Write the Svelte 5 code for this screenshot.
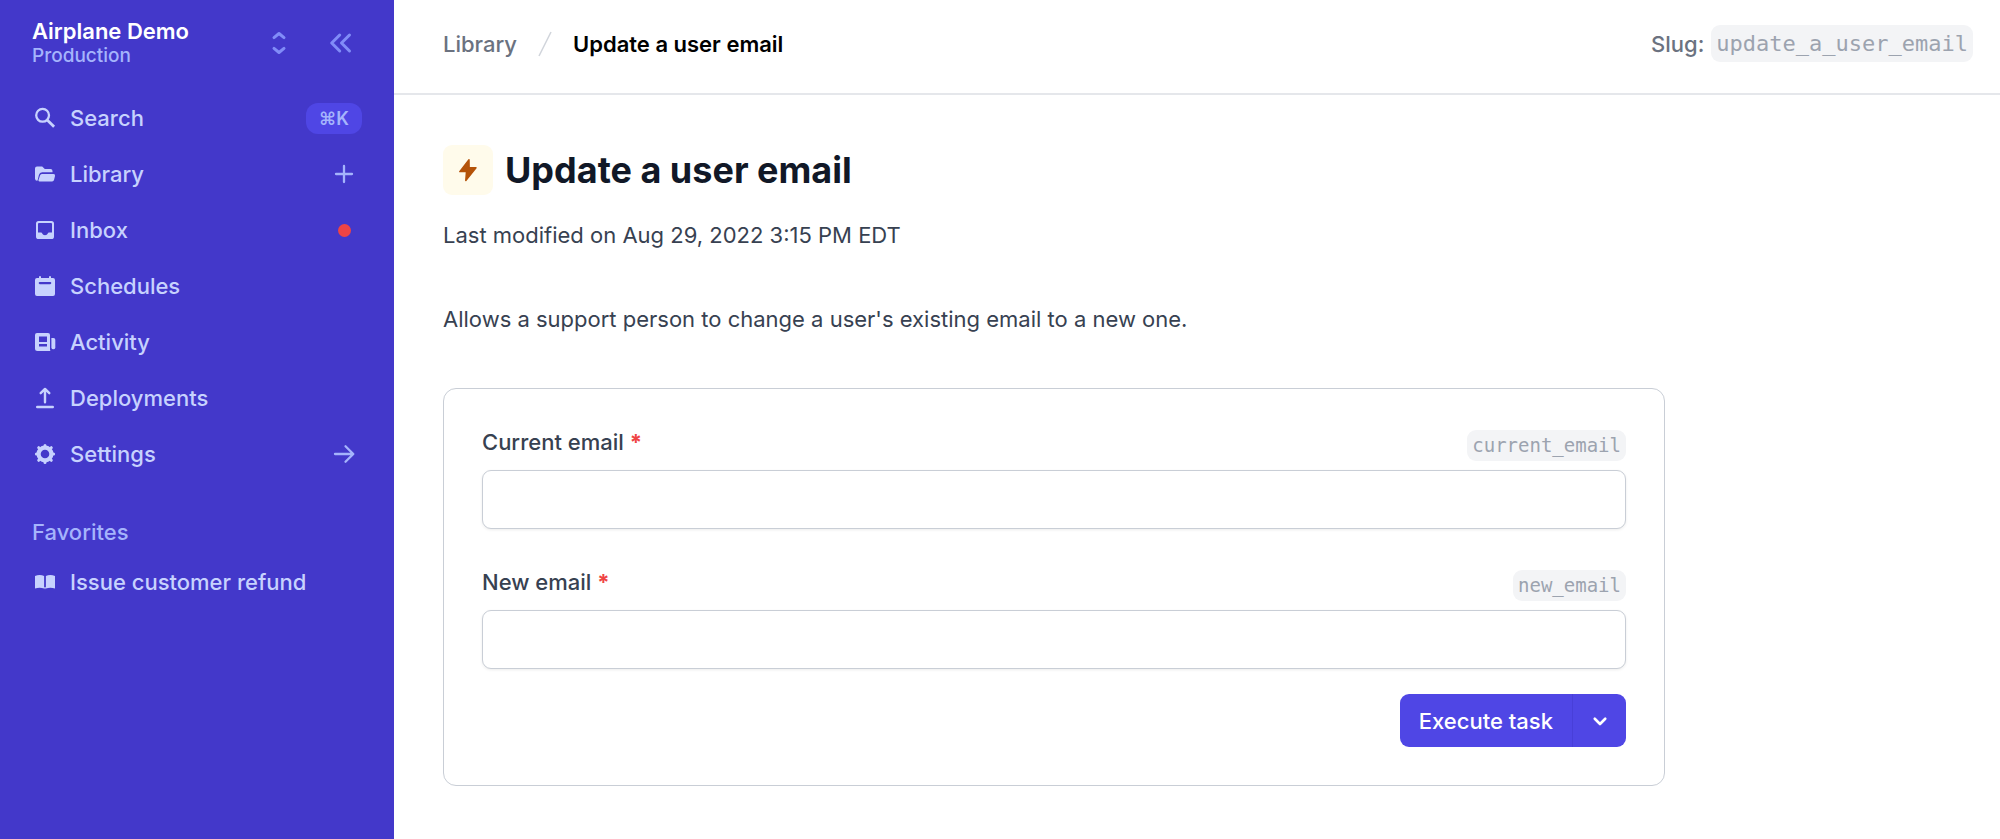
<script>
  // Main navigation; `end` is what sits on the right edge of the row
  const NAV = [
    { icon: 'search', label: 'Search', end: 'shortcut' },
    { icon: 'library', label: 'Library', end: 'plus' },
    { icon: 'inbox', label: 'Inbox', end: 'dot' },
    { icon: 'schedules', label: 'Schedules' },
    { icon: 'activity', label: 'Activity' },
    { icon: 'deployments', label: 'Deployments' },
    { icon: 'settings', label: 'Settings', end: 'arrow' },
  ];

  const FAVORITES = [{ icon: 'book', label: 'Issue customer refund' }];

  const FIELDS = [
    { slug: 'current_email', label: 'Current email' },
    { slug: 'new_email', label: 'New email' },
  ];

  let values = $state({ current_email: '', new_email: '' });

  function execute(e) {
    e.preventDefault();
  }
</script>

{#snippet navIcon(name)}
  <svg class="nav-icon" viewBox="0 0 24 24" fill="currentColor" aria-hidden="true">
    {#if name === 'search'}
      <g fill="none" stroke="currentColor" stroke-width="2.3">
        <circle cx="9.6" cy="9.3" r="6.4" />
        <path d="M14.2 13.900l6.900 6.900" stroke-width="2.800" />
      </g>
    {:else if name === 'library'}
      <path d="M2 6.500a2 2 0 0 1 2-2h5.200l2.600 2.400h5.700a2 2 0 0 1 2 2v1.400H9.200a3.400 3.400 0 0 0-3.300 2.600L4.600 18.600A2.200 2.200 0 0 1 2 16.800z" />
      <path d="M8.900 11.900h11.400a1.700 1.700 0 0 1 1.700 2.100l-1 4a2 2 0 0 1-1.900 1.500H6.600a1.100 1.100 0 0 1-1.100-1.400l1.500-4.700a2 2 0 0 1 1.900-1.500z" />
    {:else if name === 'inbox'}
      <path fill-rule="evenodd" d="M5.600 3h12.800A2.600 2.600 0 0 1 21 5.600v12.800a2.600 2.600 0 0 1-2.600 2.600H5.600A2.600 2.600 0 0 1 3 18.400V5.600A2.600 2.600 0 0 1 5.600 3zM6 5a1 1 0 0 0-1 1v8.600h3.200a1 1 0 0 1 .9.600c.5 1.200 1.600 2 2.900 2s2.400-.8 2.900-2a1 1 0 0 1 .9-.6H19V6a1 1 0 0 0-1-1z" />
    {:else if name === 'schedules'}
      <path fill-rule="evenodd" d="M7 2a1 1 0 0 1 1 1v1h8V3a1 1 0 0 1 2 0v1h2a2 2 0 0 1 2 2v14a2 2 0 0 1-2 2H4a2 2 0 0 1-2-2V6a2 2 0 0 1 2-2h2V3a1 1 0 0 1 1-1zM6.800 8a1 1 0 0 0 0 2.200h10.400a1 1 0 0 0 0-2.200z" />
    {:else if name === 'activity'}
      <path fill-rule="evenodd" d="M4 3h11a2 2 0 0 1 2 2v14.500c0 .6.200 1 .5 1.500H4.500A2.500 2.500 0 0 1 2 18.500V5a2 2 0 0 1 2-2zM6 6.500V12h8V6.500zM6 14v2.500h8V14z" />
      <path d="M18.400 8h2.100a1.800 1.800 0 0 1 1.800 1.800v8a2 2 0 0 1-3.900 0z" />
    {:else if name === 'deployments'}
      <path d="M12 16.200V3.200M7.700 7.200L12 2.900l4.300 4.300M4.200 21h15.600" fill="none" stroke="currentColor" stroke-width="2.400" stroke-linecap="round" stroke-linejoin="round" />
    {:else if name === 'settings'}
      <g fill="none" stroke="currentColor">
        <circle cx="12" cy="12" r="6.400" stroke-width="4.200" />
        <path d="M12 4v-.6M12 20v.6M4 12h-.6M20 12h.6M6.300 6.300l-.6-.6M17.700 6.300l.6-.6M6.300 17.700l-.6.600M17.700 17.700l.6.600" stroke-width="3" stroke-linecap="round" />
      </g>
    {:else if name === 'book'}
      <path d="M2 6.100C5 4.600 8.500 4.700 11.100 6v12.600C8.500 17.500 5 17.400 2 18.600zM12.900 6c2.600-1.300 6.100-1.400 9.100.1v12.500c-3-1.200-6.500-1.100-9.100 0z" />
      <path d="M10.900 17.300h2.200L12 19.500z" />
    {/if}
  </svg>
{/snippet}

<div class="app">
  <aside class="sidebar">
    <div class="workspace">
      <div class="workspace-name">
        <strong>Airplane Demo</strong>
        <span>Production</span>
      </div>
      <button type="button" class="icon-btn" aria-label="Switch workspace">
        <svg viewBox="0 0 24 24" fill="none" stroke="currentColor" stroke-width="3" stroke-linecap="round" stroke-linejoin="round">
          <path d="M7 6.600L12 2.500l5 4.100M7 17.400l5 4.100 5-4.100" />
        </svg>
      </button>
      <button type="button" class="icon-btn" aria-label="Collapse sidebar">
        <svg viewBox="0 0 24 24" fill="none" stroke="currentColor" stroke-width="3" stroke-linecap="round" stroke-linejoin="round">
          <path d="M10.700 4L2.700 12l8 8M20.500 4l-8 8 8 8" />
        </svg>
      </button>
    </div>

    <nav class="nav">
      {#each NAV as item}
        <a href="#{item.icon}" class="nav-item">
          {@render navIcon(item.icon)}
          <span class="nav-label">{item.label}</span>
          {#if item.end === 'shortcut'}
            <kbd>⌘K</kbd>
          {:else if item.end}
            <span class="nav-end">
              {#if item.end === 'dot'}
                <i class="dot"></i>
              {:else}
                <svg viewBox="0 0 24 24" fill="none" stroke="currentColor" stroke-width="2.300" stroke-linecap="round" stroke-linejoin="round" aria-hidden="true">
                  {#if item.end === 'plus'}
                    <path d="M12 4v16M4 12h16" />
                  {:else}
                    <path d="M3 12h18M13.500 4.200L21.300 12l-7.800 7.800" />
                  {/if}
                </svg>
              {/if}
            </span>
          {/if}
        </a>
      {/each}
    </nav>

    <h2 class="nav-heading">Favorites</h2>
    <nav class="nav">
      {#each FAVORITES as item}
        <a href="#{item.icon}" class="nav-item">
          {@render navIcon(item.icon)}
          <span class="nav-label">{item.label}</span>
        </a>
      {/each}
    </nav>
  </aside>

  <div class="page">
    <header class="topbar">
      <a href="#library" class="crumb">Library</a>
      <svg class="crumb-sep" viewBox="0 0 14 26" fill="none" stroke="currentColor" aria-hidden="true">
        <path d="M13 1L1 25" stroke-width="1.500" />
      </svg>
      <span class="crumb current">Update a user email</span>
      <div class="slug">Slug: <code>update_a_user_email</code></div>
    </header>

    <main class="content">
      <div class="title">
        <span class="title-icon">
          <svg viewBox="0 0 24 24" fill="currentColor" stroke="currentColor" stroke-width="1.500" stroke-linejoin="round" aria-hidden="true">
            <path d="M13 1.800L3.800 13.600h6.700L9.800 22.500 20 9.800h-6.900z" />
          </svg>
        </span>
        <h1>Update a user email</h1>
      </div>
      <p class="modified">Last modified on Aug 29, 2022 3:15 PM EDT</p>
      <p class="description">Allows a support person to change a user's existing email to a new one.</p>

      <form class="card" onsubmit={execute}>
        {#each FIELDS as field}
          <div class="field">
            <div class="field-head">
              <label for={field.slug}>{field.label} <span class="required">*</span></label>
              <code>{field.slug}</code>
            </div>
            <input id={field.slug} type="text" bind:value={values[field.slug]} />
          </div>
        {/each}

        <div class="actions">
          <button type="submit" class="execute">Execute task</button>
          <button type="button" class="more" aria-label="More options">
            <svg viewBox="0 0 24 24" fill="none" stroke="currentColor" stroke-width="3.500" stroke-linecap="round" stroke-linejoin="round">
              <path d="M5 9l7 7 7-7" />
            </svg>
          </button>
        </div>
      </form>
    </main>
  </div>
</div>

<style>
  :global(body) {
    margin: 0;
    background: #fff;
  }

  .app {
    display: flex;
    min-height: 100vh;
    font-family: Inter, 'Liberation Sans', sans-serif;
    font-size: 22px;
    line-height: 30px;
    color: #374151;
  }
  .app * { box-sizing: border-box; }

  a { color: inherit; text-decoration: none; }
  svg { display: block; }
  button {
    border: 0;
    padding: 0;
    font: inherit;
    cursor: pointer;
  }
  h1, h2, p { margin: 0; }

  code {
    padding: 0 5px;
    border-radius: 9px;
    background: #f3f4f6;
    color: #9ca3af;
    font-family: 'DejaVu Sans Mono', monospace;
  }

  /* Sidebar */
  .sidebar {
    flex: 0 0 394px;
    padding: 18px 32px 32px;
    background: #4338ca;
    color: #c7d2fe;
    font-weight: 500;
  }

  .workspace {
    display: flex;
    align-items: center;
    gap: 38px;
    height: 50px;
    padding-right: 9px;
  }
  .workspace-name {
    flex: 1;
    display: flex;
    flex-direction: column;
  }
  .workspace-name strong {
    color: #fff;
    font-weight: 600;
    line-height: 26px;
  }
  .workspace-name span {
    color: #a5b4fc;
    font-size: 19px;
    line-height: 24px;
  }
  .icon-btn {
    background: none;
    color: #818cf8;
  }
  .icon-btn svg { width: 24px; height: 24px; }

  .nav { margin-top: 22px; }
  .nav-item {
    display: flex;
    align-items: center;
    gap: 13px;
    height: 56px;
  }
  .nav-icon {
    flex: none;
    width: 24px;
    height: 24px;
    margin-left: 1px;
  }
  .nav-label { flex: 1; }
  .nav-end {
    display: flex;
    justify-content: center;
    width: 24px;
    margin-right: 6px;
    color: #a5b4fc;
  }
  .nav-end svg { width: 24px; height: 24px; }
  .dot {
    width: 13px;
    height: 13px;
    border-radius: 50%;
    background: #ef4444;
  }
  kbd {
    padding: 0 13px;
    border-radius: 12px;
    background: #4f46e5;
    color: #a5b4fc;
    font: 600 18px/31px Inter, 'DejaVu Sans', sans-serif;
  }

  .nav-heading {
    margin-top: 35px;
    color: #a5b4fc;
    font-size: 22px;
    font-weight: 500;
  }
  .nav-heading + .nav { margin-top: 7px; }

  /* Top bar */
  .page {
    flex: 1;
    min-width: 0;
  }
  .topbar {
    display: flex;
    align-items: center;
    gap: 21px;
    height: 95px;
    padding: 0 27px 6px 49px;
    border-bottom: 2px solid #e5e7eb;
    color: #6b7280;
    font-weight: 500;
  }
  .crumb.current {
    color: #000;
    font-weight: 600;
  }
  .crumb-sep {
    width: 14px;
    height: 26px;
    color: #d1d5db;
  }
  .slug {
    display: flex;
    align-items: center;
    gap: 7px;
    margin-left: auto;
  }
  .slug code {
    font-weight: 400;
    line-height: 37px;
  }

  /* Content */
  .content {
    max-width: 1320px;
    padding: 50px 49px;
  }
  .title {
    display: flex;
    align-items: center;
    gap: 12px;
  }
  .title-icon {
    display: grid;
    place-items: center;
    width: 50px;
    height: 50px;
    border-radius: 9px;
    background: #fffbeb;
    color: #b45309;
  }
  .title-icon svg { width: 24px; height: 24px; }
  h1 {
    color: #111827;
    font-size: 36px;
    font-weight: 700;
    line-height: 48px;
  }
  .modified { margin-top: 25px; }
  .description { margin-top: 54px; }

  .card {
    margin-top: 54px;
    padding: 38px;
    border: 1px solid #c9ced6;
    border-radius: 13px;
  }
  .field + .field { margin-top: 38px; }
  .field-head {
    display: flex;
    justify-content: space-between;
    height: 34px;
    margin-bottom: 9px;
  }
  .field-head label { font-weight: 500; }
  .required {
    color: #ef4444;
    font-weight: 700;
  }
  .field-head code {
    align-self: flex-end;
    font-size: 19px;
    line-height: 31px;
  }
  input {
    display: block;
    width: 100%;
    height: 59px;
    padding: 0 18px;
    border: 1px solid #c9ced6;
    border-radius: 9px;
    background: #fff;
    box-shadow: 0 1px 3px rgba(0, 0, 0, 0.08);
    color: inherit;
    font: inherit;
  }

  .actions {
    display: flex;
    justify-content: flex-end;
    margin-top: 25px;
  }
  .actions button {
    height: 53px;
    background: #4f46e5;
    color: #fff;
    font-weight: 500;
  }
  .actions .execute {
    padding: 0 19px;
    border-radius: 9px 0 0 9px;
  }
  .actions .more {
    display: grid;
    place-items: center;
    width: 54px;
    border-left: 1px solid #483fd8;
    border-radius: 0 9px 9px 0;
  }
  .more svg { width: 18px; height: 18px; }
</style>
